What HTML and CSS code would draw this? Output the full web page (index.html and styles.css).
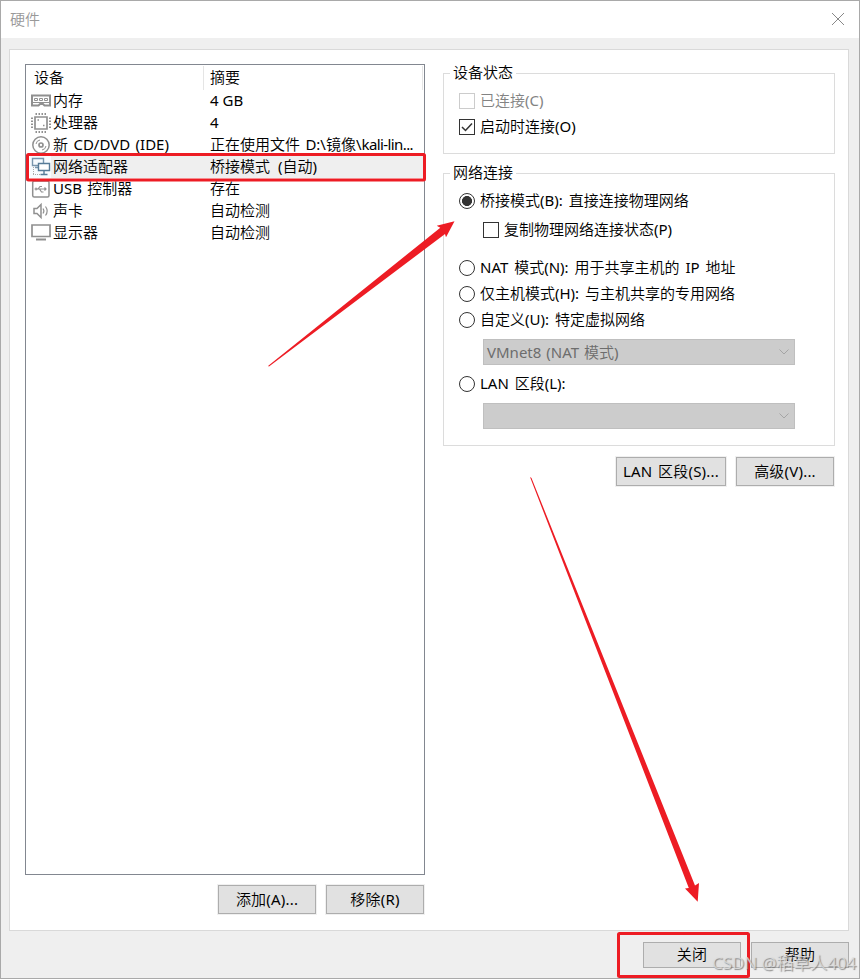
FILE: index.html
```
<!DOCTYPE html>
<html lang="zh-CN">
    <head>
        <title>硬件</title>
        <meta charset="utf-8">
        <link rel="stylesheet" href="styles.css">
    </head>
    <body>
        <main class="window">
            <header>
                <h1>硬件</h1>
                <svg class="close" width="14" height="14" viewBox="0 0 14 14"><path d="M1 1L13 13M13 1L1 13"/></svg>
            </header>
            <div class="panel">
                <section class="left">
                    <div class="list">
                        <div class="row head"><span>设备</span><span>摘要</span></div>
                        <div class="row">
                            <svg class="icon" viewBox="0 0 22 22"><path stroke-width="2" d="M2 5.500H20V15.500H14.500L13 14H10L8.500 15.500H2Z"/><path d="M4.500 8.500H7.500V10.500H4.500ZM9.500 8.500H12.500V10.500H9.500ZM14.500 8.500H17.500V10.500H14.500ZM3 12.500H19"/></svg>
                            <span>内存</span><span class="mem">4 GB</span>
                        </div>
                        <div class="row">
                            <svg class="icon" viewBox="0 0 22 22"><path stroke-width="1.700" d="M5 5H17V17H5Z"/><path stroke-width="2" stroke-dasharray="1.500 1.500" d="M5.500 2H17M5.500 20H17M2 5.500V17M20 5.500V17"/><path stroke-width="1.500" d="M7.500 8H9M13 13.500H14.500"/></svg>
                            <span>处理器</span><span>4</span>
                        </div>
                        <div class="row">
                            <svg class="icon" viewBox="0 0 22 22"><circle cx="11" cy="11" r="8.200" stroke-width="1.500"/><circle cx="11" cy="11" r="2" stroke-width="1.700"/><path d="M6 10Q6.500 6.500 10 6M12 16Q15.500 15.500 16 12"/></svg>
                            <span>新 CD/DVD (IDE)</span><span class="file">正在使用文件 D:\镜像\<i>kali-lin...</i></span>
                        </div>
                        <div class="row selected">
                            <svg class="icon net" viewBox="0 0 22 22"><path class="dots" d="M3.500 9V19M3 18.500H14"/><path stroke-width="1.400" d="M2.500 2.500H13.500V9.500H2.500ZM5 11.500H8"/><path class="front" d="M8.500 7.500H19.500V14.500H8.500ZM14 15V18M10.500 18.500H17.500"/></svg>
                            <span>网络适配器</span><span>桥接模式 (自动)</span>
                        </div>
                        <div class="row">
                            <svg class="icon" viewBox="0 0 22 22"><rect x="2.700" y="3" width="16.300" height="16" rx="1.500" stroke-width="1.500"/><path stroke-width="1.200" d="M5.500 11H16M8 11L10 8.500H12M9.500 11L11.500 14H13.500M14.500 9.500L16 11L14.500 12.500"/><circle cx="6" cy="11" r="1"/></svg>
                            <span>USB 控制器</span><span>存在</span>
                        </div>
                        <div class="row">
                            <svg class="icon" viewBox="0 0 22 22"><path stroke-width="1.500" d="M4 8.500H7L11 4.500V17.500L7 13.500H4Z"/><path stroke-width="1.200" d="M13 8.500Q14.800 11 13 13.500M15.500 6.500Q18.800 11 15.500 15.500"/></svg>
                            <span>声卡</span><span>自动检测</span>
                        </div>
                        <div class="row">
                            <svg class="icon" viewBox="0 0 22 22"><path stroke-width="1.700" d="M2 3H20V14.500H2Z"/><path stroke-width="2" d="M6 17.500H16"/></svg>
                            <span>显示器</span><span>自动检测</span>
                        </div>
                    </div>
                    <div class="buttons">
                        <button>添加(A)...</button>
                        <button>移除(R)</button>
                    </div>
                </section>
                <section class="right">
                    <fieldset class="status">
                        <legend>设备状态</legend>
                        <label class="disabled"><i class="box"></i>已连接(C)</label>
                        <label><i class="box"><svg width="14" height="14" viewBox="0 0 14 14"><path d="M2 7L5.500 10.500L12 3.500"/></svg></i>启动时连接(O)</label>
                    </fieldset>
                    <fieldset class="network">
                        <legend>网络连接</legend>
                        <label class="bridge"><i class="radio on"></i>桥接模式(B): 直接连接物理网络</label>
                        <label class="copy"><i class="box"></i>复制物理网络连接状态(P)</label>
                        <label><i class="radio"></i>NAT 模式(N): 用于共享主机的 IP 地址</label>
                        <label><i class="radio"></i>仅主机模式(H): 与主机共享的专用网络</label>
                        <label><i class="radio"></i>自定义(U): 特定虚拟网络</label>
                        <div class="select">VMnet8 (NAT 模式)<svg width="10" height="6" viewBox="0 0 10 6"><path d="M.5 .5L5 5L9.500 .5"/></svg></div>
                        <label class="lan"><i class="radio"></i>LAN 区段(L):</label>
                        <div class="select"><svg width="10" height="6" viewBox="0 0 10 6"><path d="M.5 .5L5 5L9.500 .5"/></svg></div>
                    </fieldset>
                    <div class="buttons">
                        <button class="wide">LAN 区段(S)...</button>
                        <button>高级(V)...</button>
                    </div>
                </section>
            </div>
            <footer>
                <button>关闭</button>
                <button>帮助</button>
            </footer>
        </main>
        <svg class="marks" width="860" height="979" viewBox="0 0 860 979">
            <rect x="27.500" y="154.500" width="397" height="25.500" rx="1"/>
            <rect x="618.500" y="933.500" width="130" height="43" rx="1"/>
            <path d="M268 366L440.300 227.700L436.700 225.700L454.500 221.300L446 237.300L445 234L269 366.500Z"/>
            <path d="M530 477L688.800 888L685 888.500L697.700 901.800L699 883L695 885.500L531.500 478Z"/>
        </svg>
        <div class="watermark">CSDN @稻草人404</div>
    </body>
</html>
```
FILE: styles.css
```
*{
    box-sizing: border-box;
}
body{
    margin: 0;
    font: 15px/22px "Noto Sans", "Noto Sans CJK SC DemiLight", "Noto Sans CJK SC", sans-serif;
    color: #000;
    cursor: default;
    overflow: hidden;
}
i{
    font-style: normal;
}
svg{
    fill: none;
}
.window{
    display: flex;
    flex-direction: column;
    width: 860px;
    height: 979px;
    border: 1px solid #a9a9a9;
    background: #efefef;
}
header{
    display: flex;
    justify-content: space-between;
    height: 37px;
    padding: 8px 14px 0 9px;
    background: #fff;
}
h1{
    margin: 0;
    font-size: 15px;
    line-height: 20px;
    font-weight: normal;
    color: #999;
}
.close{
    margin-top: 3px;
    stroke: #888;
}
.panel{
    display: flex;
    gap: 18px;
    width: 840px;
    height: 882px;
    margin: 11px 0 0 8px;
    padding: 14px 13px 0 15px;
    border: 1px solid #d9d9d9;
    background: #fff;
}
.left{
    flex: none;
    width: 400px;
}
.list{
    height: 811px;
    border: 1px solid #828790;
}
.row{
    display: grid;
    grid-template-columns: 23px 157px 1fr;
    height: 22px;
    padding-left: 4px;
    line-height: 20px;
    white-space: nowrap;
    word-spacing: 1.5px;
}
.head{
    grid-template-columns: 170px 219px;
    height: 25px;
    margin-right: 1px;
    padding: 1px 0 0 8px;
}
.head span{
    border-right: 1px solid #e5e5e5;
    line-height: 23px;
}
.head span:last-child{
    padding-left: 6px;
}
.selected{
    background: linear-gradient(90deg, #fff 4px, #f7fbff 4px, #f7fbff 25px, #efefef 25px);
}
.selected span:last-child{
    word-spacing: 4px;
}
.mem{
    word-spacing: 0;
}
.icon{
    width: 22px;
    height: 22px;
    stroke: #909090;
}
.net{
    stroke: #7895ad;
}
.net .front{
    fill: #fff;
    stroke: #567b98;
    stroke-width: 1.4;
}
.net .dots{
    stroke: #aaa;
    stroke-dasharray: 1 1;
}
.file i{
    letter-spacing: -.6px;
}
.buttons{
    display: flex;
    justify-content: flex-end;
    gap: 10px;
    margin-top: 10px;
    padding-right: 1px;
}
button{
    width: 98px;
    height: 29px;
    padding: 0 0 2px;
    border: 1px solid #adadad;
    background: #e1e1e1;
    box-shadow: 0 0 0 1px #f0f0f0;
    font: inherit;
    letter-spacing: .2px;
    word-spacing: 1.5px;
    white-space: nowrap;
}
.wide{
    width: 110px;
}
.right{
    flex: none;
    width: 392px;
}
fieldset{
    margin: 0;
    padding: 0 0 0 15px;
    border: 1px solid #dcdcdc;
}
legend{
    height: 19px;
    margin-left: -9px;
    padding: 0 3px;
    line-height: 17px;
}
.status{
    height: 90px;
}
.network{
    height: 282px;
    margin-top: 10px;
}
label{
    display: flex;
    align-items: center;
    gap: 5px;
    height: 26px;
    padding-bottom: 2px;
    white-space: nowrap;
    word-spacing: 2px;
}
.status label:nth-child(2){
    margin-top: 5px;
}
.disabled{
    color: #838383;
}
.box,
.radio{
    width: 16px;
    height: 16px;
    margin-top: 2px;
    border: 1px solid #333;
    background: #fff;
}
.box svg{
    display: block;
    stroke: #333;
    stroke-width: 1.5;
}
.disabled .box{
    border-color: #ccc;
}
.radio{
    border-radius: 50%;
}
.on{
    background: radial-gradient(circle, #333 4.700px, #fff 5.300px);
}
.bridge{
    margin-top: 5px;
}
.copy{
    height: 32px;
    margin-bottom: 9px;
    padding-left: 24px;
}
.select{
    display: flex;
    align-items: center;
    justify-content: space-between;
    width: 312px;
    height: 26px;
    margin: 6px 0 0 24px;
    padding: 0 5px 0 3px;
    border: 1px solid #bfbfbf;
    background: #ccc;
    color: #6d6d6d;
    word-spacing: 1px;
}
.select svg{
    margin-left: auto;
    stroke: #a5a5a5;
}
.lan{
    margin-top: 6px;
}
.right .buttons{
    margin-top: 11px;
}
footer{
    display: flex;
    justify-content: flex-end;
    gap: 10px;
    padding: 11px 10px 0 0;
}
footer button{
    height: 26px;
    box-shadow: none;
}
.marks{
    position: absolute;
    top: 0;
    left: 0;
}
.marks rect{
    stroke: #ed1c24;
    stroke-width: 3;
}
.marks path{
    fill: #ed1c24;
}
.watermark{
    position: absolute;
    left: 712px;
    top: 952px;
    font-size: 17px;
    letter-spacing: -.1px;
    white-space: nowrap;
    color: rgba(225,225,225,.75);
    text-shadow: 1px 1px 1px rgba(100,100,100,.7);
}
```
